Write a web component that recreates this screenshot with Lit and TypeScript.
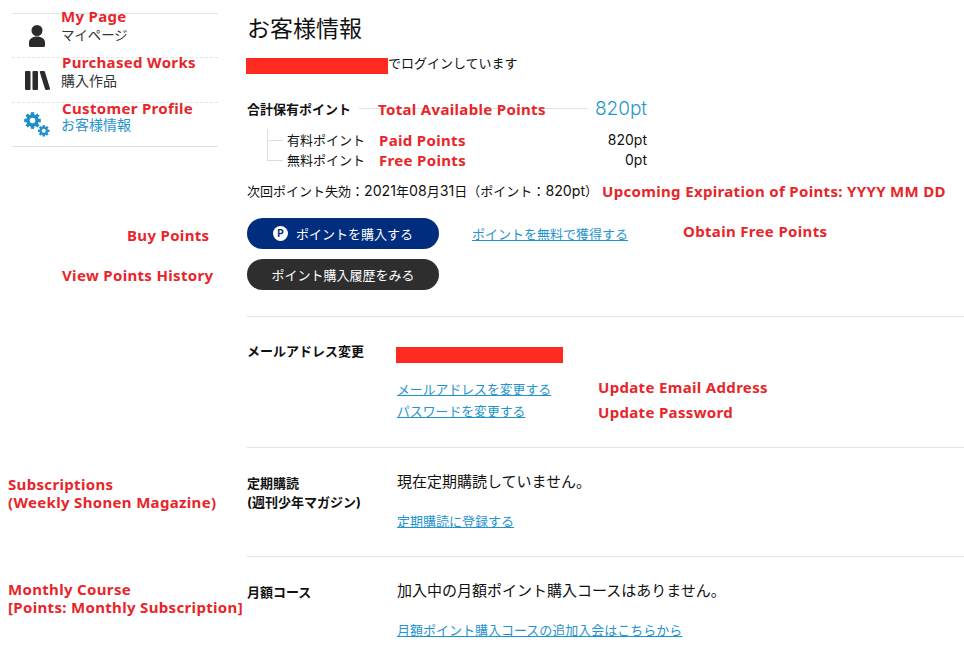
import { LitElement, html, css, svg } from "lit";
import { customElement } from "lit/decorators.js";

const gear = (cx: number, cy: number, r: number, hole: number, w: number) => {
  const teeth = [];
  for (let i = 0; i < 8; i++) {
    teeth.push(svg`<rect x=${cx - w / 2} y=${cy - r - w * 0.6} width=${w} height=${w} transform="rotate(${i * 45} ${cx} ${cy})"/>`);
  }
  return svg`<g>${teeth}<path fill-rule="evenodd" d="M${cx - r} ${cy}a${r} ${r} 0 1 0 ${2 * r} 0a${r} ${r} 0 1 0 ${-2 * r} 0zM${cx - hole} ${cy}a${hole} ${hole} 0 1 0 ${2 * hole} 0a${hole} ${hole} 0 1 0 ${-2 * hole} 0z"/></g>`;
};

const notes: [string, number, number][] = [
  ["My Page", 61, 16],
  ["Purchased Works", 62, 62],
  ["Customer Profile", 62, 108],
  ["Total Available Points", 378, 109],
  ["Paid Points", 379, 140],
  ["Free Points", 379, 160],
  ["Upcoming Expiration of Points: YYYY MM DD", 602, 191],
  ["Buy Points", 127, 235],
  ["Obtain Free Points", 683, 231],
  ["View Points History", 62, 275],
  ["Update Email Address", 598, 387],
  ["Update Password", 598, 412],
  ["Subscriptions", 8, 484],
  ["(Weekly Shonen Magazine)", 8, 502],
  ["Monthly Course", 8, 589],
  ["[Points: Monthly Subscription]", 8, 607],
];

@customElement("app-root")
export class AppRoot extends LitElement {
  static styles = css`
    :host { display: block; width: 964px; height: 660px; overflow: hidden; position: relative; background: #fff; color: #111;
      font-family: "Inter", "Noto Sans CJK JP", sans-serif; }
    .page { display: grid; grid-template-columns: 206px 717px; column-gap: 29px; padding: 0 0 0 12px; }
    aside { padding-top: 13px; }
    .nav { height: 44px; display: flex; align-items: flex-start; border-top: 1px dashed #e4e4e4; font-size: 14px; color: #333; }
    .nav:first-child { height: 43px; border-top: 1px solid #e4e4e4; font-size: 13.4px; }
    .nav:first-child span { padding-top: 13px; }
    .nav:nth-child(2) span { padding-top: 15px; }
    .nav:last-child { height: 43px; border-bottom: 1px solid #e0e0e0; }
    .nav.on { color: #1f94cf; }
    .ico { width: 50px; height: 100%; flex: none; display: flex; align-items: center; justify-content: center; }
    .ico svg { display: block; fill: #2b2b2b; }
    .nav.on .ico svg { fill: #1f8fca; }
    .nav span { line-height: 16px; padding-top: 14px; margin-left: -1px; }
    main { min-width: 0; }
    h1 { font-size: 23px; font-weight: 400; line-height: 30px; margin: 14px 0 0; color: #111; }
    .login { display: flex; align-items: center; height: 20px; margin: 8px 0 0 -1px; font-size: 13px; }
    .red { display: block; background: #ff2a1f; flex: none; }
    .login .red { width: 142px; height: 16px; align-self: flex-start; margin-top: 6px; }
    .points { width: 400px; margin-top: 26px; font-size: 13px; }
    .total { display: flex; align-items: center; height: 20px; font-weight: 700; }
    .total i { flex: 1; height: 1px; background: #e2e2e2; margin: 0 7px 0 8px; }
    .total b { font-size: 19px; font-weight: 300; color: #1f94cf; }
    .sub { margin-top: 12px; padding-left: 20px; }
    .subrow { display: flex; justify-content: space-between; height: 20px; line-height: 20px; padding-left: 20px; position: relative; }
    .subrow .amt { font-size: 14px; }
    .subrow::before { content: ""; position: absolute; left: 0; top: -1px; width: 15px; height: 11px; border-left: 1px solid #ddd; border-bottom: 1px solid #ddd; }
    .subrow + .subrow::before { top: -10px; height: 20px; }
    .expire { font-size: 13px; margin-top: 11px; line-height: 20px; }
    .n { font-size: 14.2px; }
    .cta { display: grid; grid-template-columns: 192px auto; column-gap: 33px; row-gap: 10px; align-items: center; justify-content: start; margin-top: 17px; }
    .btn { height: 31px; border-radius: 16px; display: flex; align-items: center; justify-content: center; gap: 8px; color: #fff; font-size: 13px; }
    .btn.blue { background: #002d7e; }
    .btn.dark { background: #2e2e2e; }
    .p { width: 15px; height: 15px; border-radius: 50%; background: #fff; color: #002d7e; font-size: 10px; font-weight: 700; line-height: 15px; text-align: center; }
    a { color: #1f94cf; text-decoration: underline; font-size: 13px; }
    .sec { display: grid; grid-template-columns: 150px 1fr; border-top: 1px solid #e2e2e2; }
    .sec .lab { font-size: 13px; font-weight: 700; line-height: 19px; padding-top: 2px; }
    .sec p { margin: 0; font-size: 15px; line-height: 20px; }
    .mail { margin-top: 26px; padding-top: 24px; height: 106px; }
    .mail .lab { padding-top: 0; line-height: 20px; }
    .mail .red { width: 167px; height: 16px; margin: 6px 0 0 -1px; }
    .links { display: flex; flex-direction: column; align-items: flex-start; gap: 4px; margin-top: 18px; line-height: 18px; }
    .mail a { font-size: 12.85px; }
    .sub-sec { padding-top: 24px; height: 84px; }
    .sub-sec .links { margin-top: 20px; }
    .note { position: absolute; color: #e8252a; font: 700 15px/18px "Noto Sans", sans-serif; letter-spacing: 0.33px; white-space: nowrap; margin-top: -9px; }
  `;

  render() {
    return html`
      <div class="page">
        <aside>
          <div class="nav"><div class="ico"><svg width="16" height="22" viewBox="0 0 16 22"><circle cx="8" cy="5.500" r="5.500"/><path d="M0 20.500v-3C0 14 3.500 11.500 8 11.500s8 2.500 8 6v3a1.500 1.500 0 0 1-1.500 1.500h-13A1.500 1.500 0 0 1 0 20.500z"/></svg></div><span>マイページ</span></div>
          <div class="nav"><div class="ico"><svg width="25" height="19" viewBox="0 0 25 19"><rect x="0" y="0" width="5.500" height="19" rx="1"/><rect x="7.500" y="0" width="5.500" height="19" rx="1"/><path d="M14.800 1.300 C14.500 .4 15 0 15.800 0h3c.6 0 1 .3 1.200.9l4.900 16.300c.3 1-.2 1.500-.9 1.600l-2.600.2c-.7 0-1.200-.3-1.400-1z"/></svg></div><span>購入作品</span></div>
          <div class="nav on"><div class="ico"><svg width="26" height="25" viewBox="0 0 26 25">${gear(8.500, 8.500, 6.300, 2.800, 3.400)}${gear(19.700, 18.800, 4.300, 2, 2.400)}</svg></div><span>お客様情報</span></div>
        </aside>
        <main>
          <h1>お客様情報</h1>
          <div class="login"><span class="red"></span><span>でログインしています</span></div>
          <div class="points">
            <div class="total"><span>合計保有ポイント</span><i></i><b>820pt</b></div>
            <div class="sub">
              <div class="subrow"><span>有料ポイント</span><span class="amt">820pt</span></div>
              <div class="subrow"><span>無料ポイント</span><span class="amt">0pt</span></div>
            </div>
          </div>
          <div class="expire">次回ポイント失効：<span class="n">2021</span>年<span class="n">08</span>月<span class="n">31</span>日（ポイント：<span class="n">820pt</span>）</div>
          <div class="cta">
            <div class="btn blue"><span class="p">P</span><span>ポイントを購入する</span></div>
            <a href="#">ポイントを無料で獲得する</a>
            <div class="btn dark"><span>ポイント購入履歴をみる</span></div>
          </div>
          <div class="sec mail">
            <div class="lab">メールアドレス変更</div>
            <div>
              <span class="red"></span>
              <div class="links"><a href="#">メールアドレスを変更する</a><a href="#">パスワードを変更する</a></div>
            </div>
          </div>
          <div class="sec sub-sec">
            <div class="lab">定期購読<br />(週刊少年マガジン)</div>
            <div><p>現在定期購読していません。</p><div class="links"><a href="#">定期購読に登録する</a></div></div>
          </div>
          <div class="sec sub-sec">
            <div class="lab">月額コース</div>
            <div><p>加入中の月額ポイント購入コースはありません。</p><div class="links"><a href="#">月額ポイント購入コースの追加入会はこちらから</a></div></div>
          </div>
        </main>
      </div>
      ${notes.map(([t, x, y]) => html`<div class="note" style="left:${x}px;top:${y}px">${t}</div>`)}
    `;
  }
}
